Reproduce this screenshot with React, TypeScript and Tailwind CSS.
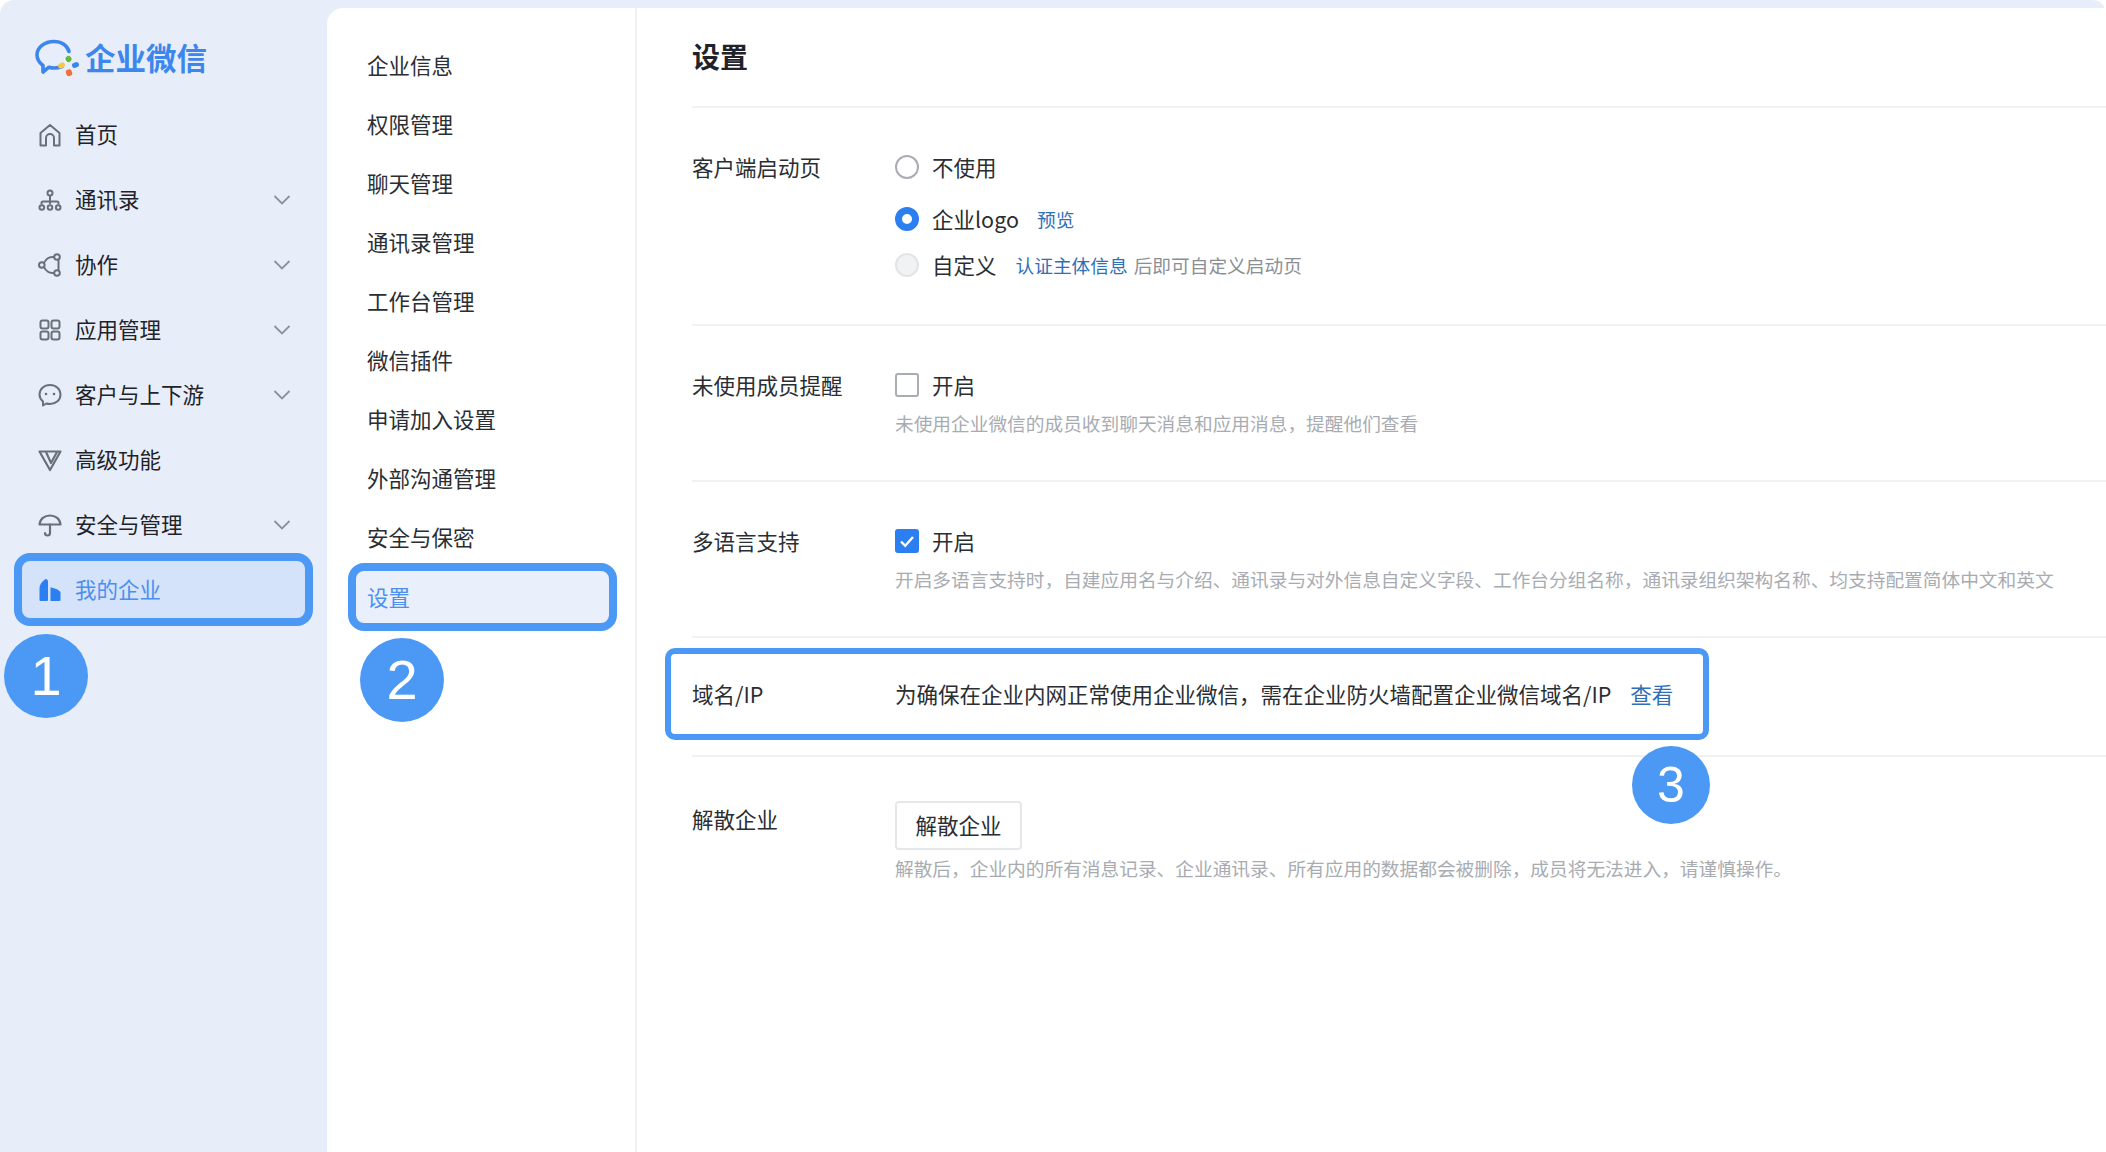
import type { ReactNode } from "react";

const font = { fontFamily: '"Noto Sans CJK SC", sans-serif' };

const iconClass = "w-[24px] h-[24px] shrink-0";

const HomeIcon = () => (
  <svg viewBox="0 0 24 24" className={iconClass} fill="none" stroke="#6b7078" strokeWidth="2">
    <path d="M2.5 22.5V10L12 2l9.5 8v12.5h-5.500V15a4 4 0 0 0-8 0v7.500z" strokeLinejoin="round" />
  </svg>
);
const ContactsIcon = () => (
  <svg viewBox="0 0 24 24" className={iconClass} fill="none" stroke="#6b7078" strokeWidth="2">
    <circle cx="12" cy="5" r="2.500" />
    <circle cx="3.800" cy="19.500" r="2.300" />
    <circle cx="12" cy="19.500" r="2.300" />
    <circle cx="20.200" cy="19.500" r="2.300" />
    <path d="M3.500 16.500v-1.500a1.500 1.500 0 0 1 1.500-1.500h14a1.500 1.500 0 0 1 1.500 1.500v1.500M12 8v8" />
  </svg>
);
const CollabIcon = () => (
  <svg viewBox="0 0 24 24" className={iconClass} fill="none" stroke="#6b7078" strokeWidth="2">
    <circle cx="19" cy="4" r="2.800" />
    <circle cx="19" cy="20" r="2.800" />
    <circle cx="3.800" cy="12" r="2.800" />
    <path d="M16.300 4A10 10 0 0 0 6 9.800M6 14.200A10 10 0 0 0 16.300 20M20.500 7v10" />
  </svg>
);
const AppsIcon = () => (
  <svg viewBox="0 0 24 24" className={iconClass} fill="none" stroke="#6b7078" strokeWidth="2">
    <rect x="2.500" y="2.500" width="8" height="8" rx="2" />
    <rect x="13.500" y="2.500" width="8" height="8" rx="2" />
    <rect x="2.500" y="13.500" width="8" height="8" rx="2" />
    <rect x="13.500" y="13.500" width="8" height="8" rx="2" />
  </svg>
);
const ChatIcon = () => (
  <svg viewBox="0 0 24 24" className={iconClass} fill="none" stroke="#6b7078" strokeWidth="2">
    <path d="M12 2c6 0 10.500 4 10.500 9.500S18 21 12 21c-1.300 0-2.500-.2-3.600-.5L5 22.500V18.500C3 16.800 1.500 14.400 1.500 11.500 1.500 6 6 2 12 2z" strokeLinejoin="round" />
    <circle cx="8" cy="11" r="1.300" fill="#6b7078" stroke="none" />
    <circle cx="16" cy="11" r="1.300" fill="#6b7078" stroke="none" />
  </svg>
);
const AdvancedIcon = () => (
  <svg viewBox="0 0 24 24" className={iconClass} fill="none" stroke="#6b7078" strokeWidth="2.200">
    <path d="M1.500 3.500h21L12 22z" strokeLinejoin="round" />
    <path d="M8 4l5 11 6-11" strokeLinejoin="round" />
  </svg>
);
const UmbrellaIcon = () => (
  <svg viewBox="0 0 24 24" className={iconClass} fill="none" stroke="#6b7078" strokeWidth="2.200">
    <path d="M1.500 11.500C2 6 6.500 2.500 12 2.500s10 3.500 10.500 9z" strokeLinejoin="round" />
    <path d="M12 11.500V20a2.500 2.500 0 0 1-5 0" strokeLinecap="round" />
  </svg>
);
const EnterpriseIcon = () => (
  <svg viewBox="0 0 24 24" className={iconClass} fill="#2b7ff0">
    <path d="M1.500 22V10c0-3 2-6 6-9 1.500 0 2.500 1 2.500 2.500V22a1 1 0 0 1-1 1H2.500a1 1 0 0 1-1-1z" />
    <path d="M12.500 23V9.500c2.500 0 9.500 2.500 10 5V22a1 1 0 0 1-1 1z" />
  </svg>
);

const Chevron = () => (
  <svg viewBox="0 0 18 12" className="w-[18px] h-[12px]" fill="none" stroke="#8d9299" strokeWidth="1.800">
    <path d="M1.500 2l7.500 7.500L16.500 2" />
  </svg>
);

const Logo = () => (
  <svg viewBox="0 0 44 38" className="w-[44px] h-[38px]" fill="none">
    <path
      d="M27 27.500c-2.500 1-5 1.500-7.500 1.500-2 0-4-.3-5.500-.8L8 33v-6.500C4 23.500 2 19.800 2 16 2 8.500 9.500 2.500 19 2.500c7.500 0 13.500 4 15 10"
      stroke="#3d86ee"
      strokeWidth="3.600"
      strokeLinejoin="round"
      strokeLinecap="round"
    />
    <path d="M32 18l3.500 4.500c-1 .8-2.300 1.300-3.500 1.500-1.500-.5-2.500-2-3-3.500 1-1 2-2 3-2.500z" fill="#ffffff" />
    <rect x="30.500" y="17" width="6" height="6" rx="2.500" fill="#62b944" transform="rotate(45 33.500 20)" />
    <rect x="37" y="23.500" width="7" height="5" rx="2.300" fill="#3d86ee" transform="rotate(-20 40.500 26)" />
    <rect x="31" y="30.500" width="6" height="6.500" rx="2.500" fill="#f0703a" transform="rotate(-20 34 33.500)" />
    <rect x="23" y="24" width="7" height="5" rx="2.300" fill="#f5c842" transform="rotate(-25 26.500 26.500)" />
  </svg>
);

const mainNav: { label: string; icon: ReactNode; more?: boolean }[] = [
  { label: "首页", icon: <HomeIcon /> },
  { label: "通讯录", icon: <ContactsIcon />, more: true },
  { label: "协作", icon: <CollabIcon />, more: true },
  { label: "应用管理", icon: <AppsIcon />, more: true },
  { label: "客户与上下游", icon: <ChatIcon />, more: true },
  { label: "高级功能", icon: <AdvancedIcon /> },
  { label: "安全与管理", icon: <UmbrellaIcon />, more: true },
];

const subNav = ["企业信息", "权限管理", "聊天管理", "通讯录管理", "工作台管理", "微信插件", "申请加入设置", "外部沟通管理", "安全与保密"];

function Sidebar() {
  return (
    <aside className="w-[327px] shrink-0 flex flex-col">
      <div className="h-[102px] flex items-center pl-[35px] pt-[13px] gap-[6px]">
        <Logo />
        <span className="text-[30.500px] font-bold text-[#3d86ee] leading-none">企业微信</span>
      </div>
      {mainNav.map((item) => (
        <div key={item.label} className="h-[65px] flex items-center pl-[38px] pr-[36px] text-[21.500px] text-[#1f2329]">
          {item.icon}
          <span className="ml-[13px]">{item.label}</span>
          {item.more && (
            <span className="ml-auto">
              <Chevron />
            </span>
          )}
        </div>
      ))}
      <div className="h-[73px] -my-[4px] mx-[14px] border-[8px] border-[#4c98f5] rounded-[16px] bg-[#d4e3f9] flex items-center pl-[16px] text-[21.500px] text-[#4c8ff0]">
        <EnterpriseIcon />
        <span className="ml-[13px]">我的企业</span>
      </div>
    </aside>
  );
}

function SubNav() {
  return (
    <nav className="w-[310px] shrink-0 border-r-2 border-[#f0f1f3] pt-[28px] flex flex-col">
      {subNav.map((label) => (
        <div key={label} className="h-[59px] flex items-center pl-[40px] text-[21.500px] text-[#2a2e33]">
          {label}
        </div>
      ))}
      <div className="h-[68px] -my-[4px] ml-[21px] mr-[18px] border-[8px] border-[#4c98f5] rounded-[16px] bg-[#e9f0fc] flex items-center pl-[11px] text-[21.500px] text-[#4c8ff0]">
        设置
      </div>
    </nav>
  );
}

const Radio = ({ state }: { state: "off" | "on" | "disabled" }) => {
  if (state === "on") return <span className="w-[24px] h-[24px] rounded-full border-[7px] border-[#2b7ff0] bg-white shrink-0" />;
  if (state === "disabled") return <span className="w-[24px] h-[24px] rounded-full border-2 border-[#e3e4e6] bg-[#f1f2f3] shrink-0" />;
  return <span className="w-[24px] h-[24px] rounded-full border-2 border-[#a9adb3] bg-white shrink-0" />;
};

function Settings() {
  return (
    <main className="flex-1 min-w-0 pl-[55px]">
      <h1 className="h-[100px] border-b-2 border-[#f0f1f3] flex items-center pb-[3px] text-[28px] font-bold text-[#1f2329]">设置</h1>

      <section className="h-[218px] border-b-2 border-[#f0f1f3] flex pt-[41px] text-[21.500px] text-[#2a2e33]">
        <div className="w-[203px] leading-[36px]">客户端启动页</div>
        <div className="flex flex-col">
          <div className="h-[36px] flex items-center">
            <Radio state="off" />
            <span className="ml-[13px]">不使用</span>
          </div>
          <div className="h-[36px] mt-[16px] flex items-center">
            <Radio state="on" />
            <span className="ml-[13px]">企业logo</span>
            <span className="ml-[18px] text-[18.700px] text-[#2f6fb8]">预览</span>
          </div>
          <div className="h-[36px] mt-[10px] flex items-center">
            <Radio state="disabled" />
            <span className="ml-[13px]">自定义</span>
            <span className="ml-[19px] text-[18.700px] text-[#2f6fb8]">认证主体信息</span>
            <span className="ml-[6px] text-[18.700px] text-[#8a8f96]">后即可自定义启动页</span>
          </div>
        </div>
      </section>

      <section className="h-[156px] border-b-2 border-[#f0f1f3] flex pt-[41px] text-[21.500px] text-[#2a2e33]">
        <div className="w-[203px] leading-[36px]">未使用成员提醒</div>
        <div className="flex flex-col">
          <div className="h-[36px] flex items-center">
            <span className="w-[24px] h-[24px] rounded-[3px] border-2 border-[#a9adb3] bg-white" />
            <span className="ml-[13px]">开启</span>
          </div>
          <p className="mt-[4px] text-[18.700px] leading-[32px] text-[#a8acb2]">未使用企业微信的成员收到聊天消息和应用消息，提醒他们查看</p>
        </div>
      </section>

      <section className="h-[156px] border-b-2 border-[#f0f1f3] flex pt-[41px] text-[21.500px] text-[#2a2e33]">
        <div className="w-[203px] leading-[36px]">多语言支持</div>
        <div className="flex flex-col">
          <div className="h-[36px] flex items-center">
            <span className="w-[24px] h-[24px] rounded-[3px] bg-[#2b7ff0] flex items-center justify-center">
              <svg viewBox="0 0 24 24" className="w-[24px] h-[24px]" fill="none" stroke="#ffffff" strokeWidth="2.400">
                <path d="M6 12.500l4.200 4.300L18 8" />
              </svg>
            </span>
            <span className="ml-[13px]">开启</span>
          </div>
          <p className="mt-[4px] text-[18.700px] leading-[32px] text-[#a8acb2] whitespace-nowrap">
            开启多语言支持时，自建应用名与介绍、通讯录与对外信息自定义字段、工作台分组名称，通讯录组织架构名称、均支持配置简体中文和英文
          </p>
        </div>
      </section>

      <section className="h-[119px] border-b-2 border-[#f0f1f3] pt-[10px] text-[21.500px] text-[#2a2e33]">
        <div className="h-[92px] w-[1044px] -ml-[27px] border-[6px] border-[#4c98f5] rounded-[10px] flex items-center pl-[21px] bg-white">
          <div className="w-[203px]">域名/IP</div>
          <span className="whitespace-nowrap">为确保在企业内网正常使用企业微信，需在企业防火墙配置企业微信域名/IP</span>
          <span className="ml-[19px] text-[#2f6fb8]">查看</span>
        </div>
      </section>

      <section className="flex pt-[44px] text-[21.500px] text-[#2a2e33]">
        <div className="w-[203px] leading-[36px]">解散企业</div>
        <div className="flex flex-col">
          <button className="w-[127px] h-[49px] border-2 border-[#e6e7e9] rounded-[4px] bg-white text-[#2a2e33] text-[21.500px]">解散企业</button>
          <p className="mt-[2px] text-[18.700px] leading-[32px] text-[#a8acb2]">解散后，企业内的所有消息记录、企业通讯录、所有应用的数据都会被删除，成员将无法进入，请谨慎操作。</p>
        </div>
      </section>
    </main>
  );
}

const Callout = ({ n, className }: { n: number; className: string }) => (
  <div
    className={`absolute rounded-full bg-[#4c98f5] text-white flex items-center justify-center ${className}`}
    style={{ fontFamily: '"Liberation Sans", sans-serif' }}
  >
    {n}
  </div>
);

export default function App() {
  return (
    <div className="relative w-[2106px] h-[1152px] overflow-hidden bg-white" style={font}>
      <div className="h-full bg-[#e7eefa] rounded-t-[14px] flex">
        <Sidebar />
        <div className="flex-1 min-w-0 mt-[8px] bg-white rounded-tl-[16px] flex">
          <SubNav />
          <Settings />
        </div>
      </div>
      <Callout n={1} className="left-[4px] top-[634px] w-[84px] h-[84px] text-[56px]" />
      <Callout n={2} className="left-[360px] top-[638px] w-[84px] h-[84px] text-[56px]" />
      <Callout n={3} className="left-[1632px] top-[746px] w-[78px] h-[78px] text-[50px]" />
    </div>
  );
}
